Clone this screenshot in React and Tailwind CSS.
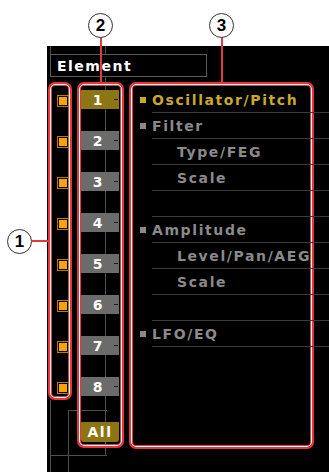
import React from "react";

const rows = [
  { label: "Oscillator/Pitch", bullet: true, active: true },
  { label: "Filter", bullet: true },
  { label: "Type/FEG", sub: true },
  { label: "Scale", sub: true },
  { label: "" },
  { label: "Amplitude", bullet: true },
  { label: "Level/Pan/AEG", sub: true },
  { label: "Scale", sub: true },
  { label: "" },
  { label: "LFO/EQ", bullet: true },
];

const tabs = ["1", "2", "3", "4", "5", "6", "7", "8"];

const redBox =
  "rounded-[7px] border-2 border-[#e2373d] shadow-[inset_0_0_0_1px_#ffffff,inset_0_0_0_2px_#e2373d]";

function Callout({ n, className }) {
  return (
    <div
      className={`absolute z-20 w-[25px] h-[25px] rounded-full border border-[#333] bg-white flex items-center justify-center text-[17px] font-bold text-black font-['Liberation_Sans',sans-serif] ${className}`}
    >
      {n}
    </div>
  );
}

export default function App() {
  return (
    <div className="relative w-[329px] h-[476px] bg-white overflow-hidden font-['DejaVu_Sans',sans-serif]">
      {/* callouts */}
      <Callout n="2" className="left-[88px] top-[13px]" />
      <div className="absolute z-10 left-[100px] top-[37px] w-[2px] h-[46px] bg-[#e2373d]" />
      <Callout n="3" className="left-[209px] top-[13px]" />
      <div className="absolute z-10 left-[221px] top-[37px] w-[2px] h-[46px] bg-[#e2373d]" />
      <Callout n="1" className="left-[7px] top-[229px]" />
      <div className="absolute z-10 left-[32px] top-[240px] w-[17px] h-[2px] bg-[#e2373d]" />

      {/* display */}
      <div className="ml-[47px] mt-[46px] w-[282px] h-[426px] bg-black bg-no-repeat bg-[linear-gradient(#4d4d4d,#4d4d4d),linear-gradient(#4d4d4d,#4d4d4d),linear-gradient(#4d4d4d,#4d4d4d),linear-gradient(#4d4d4d,#4d4d4d),linear-gradient(#4d4d4d,#4d4d4d),linear-gradient(#4d4d4d,#4d4d4d)] bg-size-[1px_8px,1px_409px,1px_72px,1px_62px,39px_1px,57px_1px] bg-position-[3px_0px,58px_0px,3px_354px,21px_364px,21px_364px,3px_409px] flex flex-col">
        <div className="ml-[3px] mt-[8px] w-[157px] h-[23px] border border-[#5a5a5a] bg-black flex items-center pl-[6px] text-white text-[14px] font-bold tracking-[1.5px] leading-none">
          Element
        </div>

        <div className="flex items-start gap-[5px] ml-[1px] mt-[5px]">
          {/* column 1 */}
          <div className={`${redBox} w-[24px] h-[318px] pt-[11px] pl-[7px] flex flex-col gap-[29px]`}>
            {tabs.map((t) => (
              <div key={t} className="w-[12px] h-[12px] border border-[#b67c16] bg-black p-[1px]">
                <div className="w-full h-full bg-[#ffa200]" />
              </div>
            ))}
          </div>

          {/* column 2 */}
          <div className={`${redBox} w-[47px] h-[366px] pt-[6px] pl-[2px] flex flex-col`}>
            <div className="flex flex-col gap-[22px]">
              {tabs.map((t, i) => (
                <div
                  key={t}
                  className={`w-[38px] h-[19px] flex items-center ${i === 0 ? "bg-[#8c7514]" : "bg-[#6b6b6b]"}`}
                >
                  <span className="flex-1 text-center text-[14px] font-bold text-white leading-none">{t}</span>
                  <span className="w-[4px] h-px bg-[#1a1a1a] mr-[1px]" />
                </div>
              ))}
            </div>
            <div className="mt-[26px] w-[38px] h-[20px] rounded-b-[3px] bg-[#8c7514] flex items-center justify-center text-[14px] font-bold text-white tracking-[1.5px] leading-none">
              All
            </div>
          </div>

          {/* column 3 */}
          <div className={`${redBox} w-[185px] h-[367px] pt-[3px] flex flex-col`}>
            {rows.map((r, i) => (
              <div key={i} className="flex h-[26px]">
                <div className="w-[21px] pl-[9px] flex items-center">
                  {r.bullet && (
                    <span className={`w-[6px] h-[6px] ${r.active ? "bg-[#c9a82c]" : "bg-[#8a8a8a]"}`} />
                  )}
                </div>
                <div className={`flex-1 -mr-[17px] border-b border-[#3a3a3a] flex items-center ${r.sub ? "pl-[25px]" : ""}`}>
                  <span
                    className={`whitespace-nowrap text-[14px] font-bold tracking-[1.6px] leading-none ${r.active ? "text-[#c9a82c]" : "text-[#8a8a8a]"}`}
                  >
                    {r.label}
                  </span>
                </div>
              </div>
            ))}
          </div>
        </div>
      </div>
    </div>
  );
}
